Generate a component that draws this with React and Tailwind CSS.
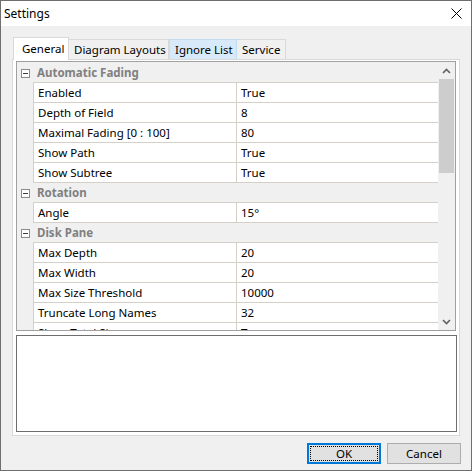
import React from "react";

const rows = [
  { cat: "Automatic Fading" },
  { n: "Enabled", v: "True" },
  { n: "Depth of Field", v: "8" },
  { n: "Maximal Fading [0 : 100]", v: "80" },
  { n: "Show Path", v: "True" },
  { n: "Show Subtree", v: "True" },
  { cat: "Rotation" },
  { n: "Angle", v: "15°" },
  { cat: "Disk Pane" },
  { n: "Max Depth", v: "20" },
  { n: "Max Width", v: "20" },
  { n: "Max Size Threshold", v: "10000" },
  { n: "Truncate Long Names", v: "32" },
  { n: "Show Total Size", v: "True" },
];

function Minus() {
  return (
    <svg width="9" height="9" viewBox="0 0 9 9" className="block">
      <rect x="0.5" y="0.5" width="8" height="8" fill="#fff" stroke="#8a8a8a" />
      <line x1="2" y1="4.5" x2="7" y2="4.5" stroke="#3c3c3c" />
    </svg>
  );
}

function Chevron({ up }) {
  return (
    <svg width="9" height="6" viewBox="0 0 9 6" className="block">
      <polyline
        points={up ? "1,5 4.5,1.5 8,5" : "1,1 4.5,4.5 8,1"}
        fill="none"
        stroke="#606060"
        strokeWidth="1.6"
      />
    </svg>
  );
}

export default function App() {
  return (
    <div
      className="w-[472px] h-[471px] border border-[#6f6f6f] flex flex-col bg-[#f0f0f0] text-[11.5px] text-black overflow-hidden whitespace-nowrap"
      style={{ fontFamily: '"Noto Sans", "Open Sans", sans-serif' }}
    >
      {/* Title bar */}
      <div className="h-[25px] bg-white flex items-center justify-between pl-[3px] pr-[9px] shrink-0">
        <span className="leading-none text-[12px]">Settings</span>
        <svg width="11" height="11" viewBox="0 0 11 11" className="block">
          <line x1="0.5" y1="0.5" x2="10.5" y2="10.5" stroke="#000" strokeWidth="1" />
          <line x1="10.5" y1="0.5" x2="0.5" y2="10.5" stroke="#000" strokeWidth="1" />
        </svg>
      </div>

      {/* Body */}
      <div className="flex-1 flex flex-col pl-[11px] pt-[11px]">
        {/* Tabs */}
        <div className="flex items-end h-[22px] w-[448px]">
          <div className="ml-[1px] w-[56px] h-[23px] -mb-[1px] bg-white border border-b-0 border-[#d9d9d9] flex items-center pl-[8px] relative z-10">
            General
          </div>
          <div className="w-[100px] h-[20px] border border-l-0 border-b-0 border-[#d9d9d9] flex items-center pl-[5px]">
            Diagram Layouts
          </div>
          <div className="w-[68px] h-[20px] bg-[#d8eaf9] border border-b-0 border-[#c0dcf3] flex items-center pl-[5px]">
            Ignore List
          </div>
          <div className="w-[49px] h-[20px] border border-l-0 border-b-0 border-[#d9d9d9] flex items-center pl-[5px]">
            Service
          </div>
        </div>

        {/* Tab page */}
        <div className="w-[448px] h-[377px] bg-white border border-[#d9d9d9] pt-[1px] pl-[3px] pr-[3px] flex flex-col">
          {/* Property grid */}
          <div className="w-[440px] h-[270px] border border-[#a0a0a0] flex bg-[#f0f0f0]">
            <div className="flex-1 overflow-hidden pt-[1px]">
              {rows.map((r, i) =>
                r.cat ? (
                  <div key={i} className="flex h-[20px]">
                    <div className="w-[16px] flex items-center justify-center pl-[1px]">
                      <Minus />
                    </div>
                    <div className="flex-1 border-b border-[#d4d0c8] flex items-center pl-[4px] font-bold text-[#808080]">
                      {r.cat}
                    </div>
                  </div>
                ) : (
                  <div key={i} className="flex h-[20px]">
                    <div className="w-[16px]" />
                    <div className="w-[203px] bg-white border-l border-b border-[#d4d0c8] flex items-center pl-[4px]">
                      {r.n}
                    </div>
                    <div className="flex-1 bg-white border-l border-b border-[#d4d0c8] flex items-center pl-[4px]">
                      {r.v}
                    </div>
                  </div>
                )
              )}
            </div>
            {/* Scrollbar */}
            <div className="w-[17px] bg-[#f0f0f0] flex flex-col">
              <div className="h-[17px] flex items-center justify-center">
                <Chevron up />
              </div>
              <div className="flex-1 flex flex-col">
                <div className="w-[15px] h-[94px] mx-auto bg-[#cdcdcd]" />
              </div>
              <div className="h-[17px] flex items-center justify-center">
                <Chevron />
              </div>
            </div>
          </div>
          {/* Description */}
          <div className="w-[441px] h-[97px] mt-[4px] bg-white border border-[#6e6e6e]" />
        </div>

        {/* Buttons */}
        <div className="flex justify-end gap-[6px] pr-[10px] mt-[7px]">
          <div className="w-[74px] h-[21px] bg-[#e1e1e1] border-2 border-[#0078d7] p-[1px]">
            <div className="w-full h-full border border-dotted border-black flex items-center justify-center">
              OK
            </div>
          </div>
          <div className="w-[74px] h-[21px] bg-[#e1e1e1] border border-[#adadad] flex items-center justify-center">
            Cancel
          </div>
        </div>
      </div>
    </div>
  );
}
